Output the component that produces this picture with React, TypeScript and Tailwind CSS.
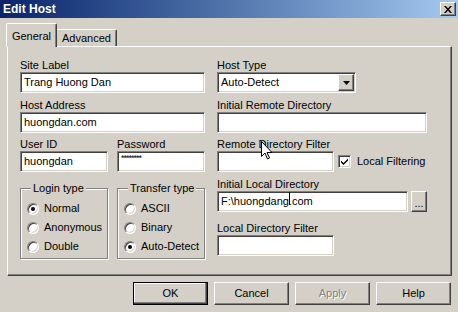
import type { ReactNode } from 'react';

const sunken =
    'bg-white border border-t-[#808080] border-l-[#808080] border-b-white border-r-white shadow-[inset_1px_1px_0_#404040,inset_-1px_-1px_0_#d4d0c8]';
const raised =
    'bg-[#d4d0c8] border border-t-white border-l-white border-b-[#404040] border-r-[#404040] shadow-[inset_-1px_-1px_0_#808080]';
const etched =
    'border border-[#808080] shadow-[inset_1px_1px_0_#fff,1px_1px_0_#fff]';

function Label({ children }: { children: ReactNode }) {
    return <div className="h-[13px] leading-[13px] whitespace-nowrap">{children}</div>;
}

function Input({ children, className = '' }: { children?: ReactNode; className?: string }) {
    return (
        <div className={`${sunken} h-[21px] flex items-center pl-[3px] whitespace-nowrap ${className}`}>
            {children}
        </div>
    );
}

function Radio({ label, checked }: { label: string; checked?: boolean }) {
    return (
        <div className="h-[19px] flex items-center gap-[5px] pl-[6px]">
            <span className="w-[12px] h-[12px] rounded-full bg-white border border-t-[#808080] border-l-[#808080] border-b-white border-r-white shadow-[inset_1px_1px_0_#404040,inset_-1px_-1px_0_#d4d0c8] flex items-center justify-center">
                {checked && <span className="w-[4px] h-[4px] rounded-full bg-black" />}
            </span>
            <span className="leading-[13px]">{label}</span>
        </div>
    );
}

function Group({ title, children }: { title: string; children: ReactNode }) {
    return (
        <div className={`relative w-[88px] h-[71px] pt-[10px] ${etched}`}>
            <span className="absolute left-[10px] -top-[7px] bg-[#d4d0c8] px-[2px] leading-[13px]">{title}</span>
            {children}
        </div>
    );
}

function Button({ children, primary, disabled }: { children: ReactNode; primary?: boolean; disabled?: boolean }) {
    const frame = primary
        ? 'bg-[#d4d0c8] border border-black shadow-[inset_-1px_-1px_0_#404040,inset_-2px_-2px_0_#808080,inset_1px_1px_0_#fff]'
        : raised;
    return (
        <div
            className={`${frame} w-[75px] h-[23px] flex items-center justify-center ${
                disabled ? 'text-[#808080] [text-shadow:1px_1px_0_#fff]' : ''
            }`}
        >
            {children}
        </div>
    );
}

export default function App() {
    return (
        <div className="relative w-[458px] h-[312px] bg-[#d4d0c8] overflow-hidden text-[11px] text-black font-['Liberation_Sans',Arial,sans-serif]">
            {/* title bar */}
            <div className="h-[18px] flex items-center justify-between pl-[3px] pr-[2px] bg-gradient-to-r from-[#0a246a] to-[#a6caf0]">
                <span className="text-white font-bold text-[12px] leading-[14px]">Edit Host</span>
                <div className={`${raised} w-[16px] h-[14px] flex items-center justify-center`}>
                    <svg width="8" height="7" viewBox="0 0 8 7">
                        <path d="M0 0h2l2 2.5L6 0h2L5 3.5 8 7H6L4 4.5 2 7H0l3-3.5z" fill="#000" />
                    </svg>
                </div>
            </div>

            {/* tabs */}
            <div className="mt-[5px] h-[23px] pl-[6px] flex items-end">
                <div className="relative z-10 -mb-px h-[24px] w-[51px] bg-[#d4d0c8] border-t border-l border-white border-r border-r-[#404040] rounded-tl-[2px] rounded-tr-[2px] shadow-[inset_-1px_0_0_#808080] flex items-start justify-center pt-[4px]">
                    General
                </div>
                <div className="h-[17px] w-[60px] border-t border-white border-r border-r-[#404040] shadow-[inset_-1px_0_0_#808080] rounded-tr-[2px] flex items-center justify-center">
                    Advanced
                </div>
            </div>

            {/* panel */}
            <div className="ml-[7px] w-[445px] h-[230px] border border-t-white border-l-white border-b-[#404040] border-r-[#404040] shadow-[inset_-1px_-1px_0_#808080] pt-[12px] pl-[12px] flex gap-[12px]">
                <div className="w-[185px] flex flex-col">
                    <Label>Site Label</Label>
                    <Input>Trang Huong Dan</Input>
                    <div className="mt-[6px]">
                        <Label>Host Address</Label>
                        <Input>huongdan.com</Input>
                    </div>
                    <div className="mt-[5px] flex gap-[9px]">
                        <div className="w-[88px]">
                            <Label>User ID</Label>
                            <Input>huongdan</Input>
                        </div>
                        <div className="w-[88px]">
                            <Label>Password</Label>
                            <Input className="!items-start pt-[2px]">
                                <span className="text-[9px] leading-[9px] tracking-[-1px]">********</span>
                            </Input>
                        </div>
                    </div>
                    <div className="mt-[16px] flex gap-[9px]">
                        <Group title="Login type">
                            <Radio label="Normal" checked />
                            <Radio label="Anonymous" />
                            <Radio label="Double" />
                        </Group>
                        <Group title="Transfer type">
                            <Radio label="ASCII" />
                            <Radio label="Binary" />
                            <Radio label="Auto-Detect" checked />
                        </Group>
                    </div>
                </div>

                <div className="w-[210px] flex flex-col">
                    <Label>Host Type</Label>
                    <div className={`${sunken} w-[139px] h-[21px] flex items-center justify-between pl-[3px] pr-px`}>
                        <span>Auto-Detect</span>
                        <div className={`${raised} w-[16px] h-[17px] flex items-center justify-center`}>
                            <svg width="7" height="4" viewBox="0 0 7 4">
                                <path d="M0 0h7L3.5 4z" fill="#000" />
                            </svg>
                        </div>
                    </div>
                    <div className="mt-[6px]">
                        <Label>Initial Remote Directory</Label>
                        <Input />
                    </div>
                    <div className="mt-[5px]">
                        <Label>Remote Directory Filter</Label>
                        <div className="flex items-center">
                            <Input className="w-[117px]" />
                            <span className="ml-[4px] w-[13px] h-[13px] bg-white border border-t-[#808080] border-l-[#808080] border-b-white border-r-white shadow-[inset_1px_1px_0_#404040,inset_-1px_-1px_0_#d4d0c8] flex items-center justify-center">
                                <svg width="7" height="7" viewBox="0 0 7 7">
                                    <path d="M0 2.5l2.5 2.5L7 0.5v2L2.5 7 0 4.5z" fill="#000" />
                                </svg>
                            </span>
                            <span className="ml-[6px] whitespace-nowrap">Local Filtering</span>
                        </div>
                    </div>
                    <div className="mt-[6px]">
                        <Label>Initial Local Directory</Label>
                        <div className="flex gap-[3px]">
                            <Input className="w-[191px]">
                                F:\huongdang
                                <span className="relative">
                                    .
                                    <span className="absolute left-0 top-[-1px] w-px h-[13px] bg-black" />
                                </span>
                                com
                            </Input>
                            <div className={`${raised} w-[16px] h-[21px] flex items-end justify-center pb-[4px] leading-[8px]`}>
                                ...
                            </div>
                        </div>
                    </div>
                    <div className="mt-[10px]">
                        <Label>Local Directory Filter</Label>
                        <Input className="w-[117px]" />
                    </div>
                </div>
            </div>

            {/* buttons */}
            <div className="mt-[6px] pr-[7px] flex justify-end gap-[6px]">
                <Button primary>OK</Button>
                <Button>Cancel</Button>
                <Button disabled>Apply</Button>
                <Button>Help</Button>
            </div>

            {/* mouse pointer */}
            <svg className="absolute left-[261px] top-[141px]" width="12" height="19" viewBox="0 0 12 19">
                <path d="M0.5 0.5v15l3.5-3.5 2.5 6 2-1-2.5-5.5h5z" fill="#fff" stroke="#000" strokeWidth="1" />
            </svg>
        </div>
    );
}
